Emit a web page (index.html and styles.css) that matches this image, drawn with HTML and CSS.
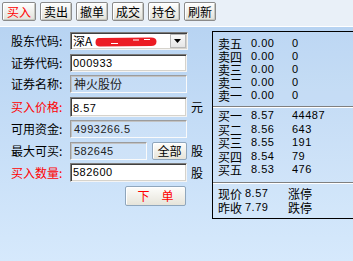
FILE: index.html
```html
<!DOCTYPE html>
<html lang="zh-CN">
<head>
<meta charset="utf-8">
<title>买入</title>
<link rel="stylesheet" href="styles.css">
</head>
<body>
<div class="tabs">
  <div class="tab active">买入</div>
  <div class="tab">卖出</div>
  <div class="tab">撤单</div>
  <div class="tab">成交</div>
  <div class="tab">持仓</div>
  <div class="tab">刷新</div>
</div>
<div class="main">
  <div class="form">
    <div class="label">股东代码:</div>
    <div class="field select">
      <span class="cjk">深A</span>
      <svg class="redact" width="62" height="10" viewBox="0 0 62 10"><path d="M4 1 L56 0.5 Q61.5 0.5 61.5 4.5 Q61.5 9 56 9 L5 9.5 Q0.5 9.5 0.5 5.5 Q0.5 1 4 1 Z" fill="#ec1c24"/><path d="M16 6.5 H23 M38 3 H44 M49 2.5 H55" stroke="#fff" stroke-width="1"/></svg>
      <span class="arrow"><svg width="8" height="5" viewBox="0 0 8 5"><path d="M0 0 H7 L3.5 4 Z" fill="#000"/></svg></span>
    </div>
    <div></div>

    <div class="label">证券代码:</div>
    <div class="field num">000933</div>
    <div></div>

    <div class="label">证券名称:</div>
    <div class="field ro cjk">神火股份</div>
    <div></div>

    <div class="label red">买入价格:</div>
    <div class="field num tall">8.57</div>
    <div class="unit">元</div>

    <div class="label">可用资金:</div>
    <div class="field ro num">4993266.5</div>
    <div></div>

    <div class="label">最大可买:</div>
    <div class="maxrow">
      <div class="field ro num short">582645</div>
      <div class="btn all">全部</div>
    </div>
    <div class="unit">股</div>

    <div class="label red">买入数量:</div>
    <div class="field num">582600</div>
    <div class="unit">股</div>

    <div></div>
    <div class="btn submit">下　单</div>
    <div></div>
  </div>

  <div class="quote">
    <div class="book sell">
      <span class="cjk">卖五</span><span class="num">0.00</span><span class="num">0</span>
      <span class="cjk">卖四</span><span class="num">0.00</span><span class="num">0</span>
      <span class="cjk">卖三</span><span class="num">0.00</span><span class="num">0</span>
      <span class="cjk">卖二</span><span class="num">0.00</span><span class="num">0</span>
      <span class="cjk">卖一</span><span class="num">0.00</span><span class="num">0</span>
    </div>
    <div class="sep sep1"></div>
    <div class="book buy">
      <span class="cjk">买一</span><span class="num">8.57</span><span class="num">44487</span>
      <span class="cjk">买二</span><span class="num">8.56</span><span class="num">643</span>
      <span class="cjk">买三</span><span class="num">8.55</span><span class="num">191</span>
      <span class="cjk">买四</span><span class="num">8.54</span><span class="num">79</span>
      <span class="cjk">买五</span><span class="num">8.53</span><span class="num">476</span>
    </div>
    <div class="sep sep2"></div>
    <div class="book last">
      <span class="cjk">现价</span><span class="num">8.57</span><span class="cjk">涨停</span>
      <span class="cjk">昨收</span><span class="num">7.79</span><span class="cjk">跌停</span>
    </div>
  </div>
</div>
</body>
</html>
```
FILE: styles.css
```css
* { box-sizing: border-box; }
html, body { margin: 0; padding: 0; }
body {
  width: 353px;
  height: 261px;
  overflow: hidden;
  font-family: "Noto Sans CJK SC", "Liberation Sans", sans-serif;
  font-size: 12px;
  color: #000;
  background: linear-gradient(#b4d1f1, #d6e9fc);
}
.cjk { font-family: "Noto Sans CJK SC", sans-serif; font-size: 12px; }
.num { font-family: "Liberation Sans", sans-serif; font-size: 11px; letter-spacing: 0.5px; }

.tabs {
  height: 27px;
  display: flex;
  gap: 4px;
  padding: 2px 0 0 2px;
  background: #e9f0f8;
  border-bottom: 1px solid #fff;
}
.tab {
  width: 32px;
  height: 19px;
  border: 1px solid #8a8a8a;
  border-radius: 2px;
  background: linear-gradient(#fefefe, #e2e2da);
  box-shadow: inset 1px 1px 0 #fff, inset -1px -1px 0 #c8c8c0;
  display: flex;
  align-items: center;
  justify-content: center;
  line-height: 1;
}
.tab.active { width: 34px; color: #f00; }

.main { display: flex; align-items: flex-start; }

.form {
  width: 212px;
  flex: none;
  display: grid;
  grid-template-columns: 70px 117px 1fr;
  grid-template-rows: 18px 18px 18px 20px 18px 18px 19px 20px;
  row-gap: 3.5px;
  padding-top: 5px;
}
.label {
  padding-left: 11px;
  align-self: center;
  line-height: 14px;
  white-space: nowrap;
}
.label.red { color: #f00; }
.unit { padding-left: 4px; align-self: center; line-height: 14px; }

.field {
  background: #fff;
  border: 1px solid;
  border-color: #7c7c7c #f4f4f4 #f4f4f4 #7c7c7c;
  box-shadow: inset 1px 1px 0 #404040, inset -1px -1px 0 #d6d3cc;
  padding: 2px 0 0 2px;
  line-height: 12px;
  white-space: nowrap;
  overflow: hidden;
}
.field.tall { padding-top: 4px; }
.field.ro {
  background: rgba(255, 255, 255, 0.12);
  border-color: #9c9c9c #fafafa #fafafa #9c9c9c;
  box-shadow: inset 1px 1px 0 #c2c2c2;
  color: #222;
  padding-left: 3px;
}
.field.ro.cjk { padding-top: 1px; line-height: 14px; }

.select {
  display: flex;
  align-items: center;
  gap: 3px;
  padding: 0 1px 0 2px;
  width: 118px;
}
.select .cjk { line-height: 14px; }
.redact { flex: none; display: block; margin-top: 1px; }
.arrow {
  margin-left: auto;
  width: 16px;
  height: 14px;
  background: linear-gradient(#fafafa, #e6e6e6);
  border: 1px solid #b8b8b8;
  display: flex;
  align-items: center;
  justify-content: center;
}

.maxrow { display: flex; gap: 5px; }
.field.short { width: 77px; }

.btn {
  border: 1px solid #8fa6bc;
  border-radius: 2px;
  background: linear-gradient(#fdfdfb, #e6e4da);
  box-shadow: inset 1px 1px 0 #fff;
  display: flex;
  align-items: center;
  justify-content: center;
  line-height: 1;
}
.btn.all { width: 35px; }
.btn.submit {
  width: 61px;
  justify-self: end;
  margin-right: 1px;
  color: #f00;
}

.quote {
  flex: none;
  width: 200px;
  height: 188px;
  margin-top: 4px;
  border: 1px solid #000;
  background: rgba(255, 255, 255, 0.08);
  padding: 5px 0 0 5px;
}
.book {
  display: grid;
  grid-template-columns: 33px 41px auto;
  line-height: 13px;
  align-items: center;
}
.book > span { line-height: 13px; height: 13px; }
.book.buy { margin-top: 1px; grid-auto-rows: 13.5px; }
.book.sell { grid-auto-rows: 13px; }
.book.last {
  grid-template-columns: 27px 43px auto;
  grid-auto-rows: 14px;
  margin-top: 2px;
}
.sep {
  height: 2px;
  margin-left: -5px;
  border-top: 1px solid #808080;
  border-bottom: 1px solid #fff;
}
.sep1 { margin-top: 4px; }
.sep2 { margin-top: 5.5px; }
```
